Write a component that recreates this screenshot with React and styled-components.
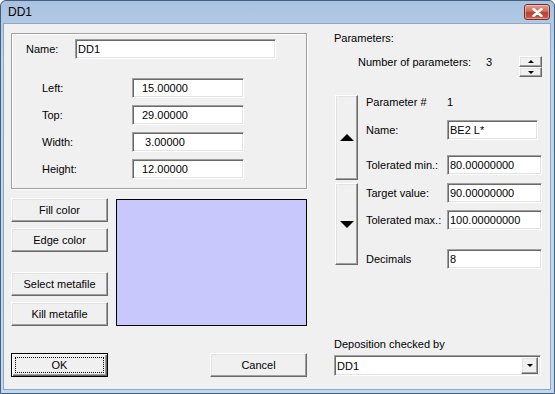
import React from 'react';
import styled, { createGlobalStyle } from 'styled-components';

const GlobalStyle = createGlobalStyle`
	html, body {
		margin: 0;
		padding: 0;
		background: #ffffff;
	}
	body {
		font-family: Tahoma, "Liberation Sans", Arial, sans-serif;
		font-size: 11px;
		color: #000000;
	}
`;

const Window = styled.div`
	box-sizing: border-box;
	width: 555px;
	height: 394px;
	display: flex;
	flex-direction: column;
	border: 1px solid #44607f;
	border-radius: 6px 6px 0 0;
	padding: 0 3px 3px 2px;
	background: linear-gradient(#a9c2df, #bfd5ec 60px, #c3d8ee);
`;

const TitleBar = styled.div`
	height: 22px;
	display: flex;
	align-items: center;
	justify-content: space-between;
	padding: 0 1px 0 5px;
	font-size: 12px;
`;

const CloseButton = styled.div`
	box-sizing: border-box;
	width: 26px;
	height: 16px;
	display: flex;
	align-items: center;
	justify-content: center;
	border: 1px solid #7a2e2a;
	border-radius: 3px;
	background: linear-gradient(#e1a196, #cd6a5c 45%, #b6402f 55%, #c8624f);
	box-shadow: inset 0 0 0 1px rgba(255, 220, 210, 0.5);
`;

const Client = styled.div`
	flex: 1;
	display: grid;
	grid-template-columns: 296px 208px;
	column-gap: 27px;
	padding: 0 8px 0 7px;
	background: #f0f0f0;
	border: 1px solid #8ea7c6;
`;

const Column = styled.div`
	display: flex;
	flex-direction: column;
	& > * {
		flex-shrink: 0;
	}
`;

const GroupBox = styled.div`
	box-sizing: border-box;
	height: 156px;
	margin-top: 9px;
	padding: 5px 0 0 14px;
	border: 1px solid #a0a0a0;
	box-shadow: inset 1px 1px 0 #ffffff, 1px 1px 0 #ffffff;
`;

const Row = styled.div`
	display: flex;
	align-items: center;
	height: 20px;
	margin-top: ${(p) => p.$gap || 0}px;
	padding-left: ${(p) => p.$indent || 0}px;
`;

const Label = styled.span`
	display: inline-block;
	width: ${(p) => p.$w}px;
	flex-shrink: 0;
	white-space: pre;
`;

const Field = styled.div`
	box-sizing: border-box;
	width: ${(p) => p.$w}px;
	height: ${(p) => p.$h || 20}px;
	display: flex;
	align-items: center;
	padding-left: ${(p) => p.$pad || 2}px;
	background: #ffffff;
	border: 1px solid;
	border-color: #a0a0a0 #ffffff #ffffff #a0a0a0;
	box-shadow: inset 1px 1px 0 #696969, inset -1px -1px 0 #e3e3e3;
	white-space: pre;
`;

const Lower = styled.div`
	display: grid;
	grid-template-columns: 97px 191px;
	column-gap: 8px;
	margin-top: 9px;
`;

const ButtonStack = styled.div`
	display: flex;
	flex-direction: column;
`;

const Button = styled.div`
	box-sizing: border-box;
	width: 97px;
	height: 24px;
	margin-top: ${(p) => p.$gap || 0}px;
	display: flex;
	align-items: center;
	justify-content: center;
	background: #f0f0f0;
	border: 1px solid;
	border-color: #ffffff #696969 #696969 #ffffff;
	box-shadow: inset -1px -1px 0 #a0a0a0, inset 1px 1px 0 #e3e3e3;
`;

const DefaultButton = styled(Button)`
	border: 1px solid #000000;
	box-shadow: inset 1px 1px 0 #ffffff, inset -1px -1px 0 #696969,
		inset -2px -2px 0 #a0a0a0;
	span {
		box-sizing: border-box;
		width: 89px;
		height: 16px;
		display: flex;
		align-items: center;
		justify-content: center;
		border: 1px dotted #000000;
	}
`;

const Preview = styled.div`
	box-sizing: border-box;
	height: 127px;
	margin-top: 1px;
	background: #c8c8fc;
	border: 1px solid #000000;
`;

const Footer = styled.div`
	display: flex;
	justify-content: space-between;
	margin-top: 27px;
`;

const Caption = styled.div`
	display: flex;
	line-height: 14px;
	margin-top: ${(p) => p.$gap || 0}px;
`;

const CountRow = styled.div`
	display: flex;
	align-items: flex-start;
	margin-top: 11px;
	padding-left: 24px;
	span {
		line-height: 14px;
		margin-top: -1px;
	}
`;

const Spinner = styled.div`
	display: flex;
	flex-direction: column;
	margin-left: auto;
`;

const SpinButton = styled(Button)`
	width: 23px;
	height: ${(p) => p.$h}px;
`;

const ParamPanel = styled.div`
	display: grid;
	grid-template-columns: 23px 1fr;
	column-gap: 8px;
	margin-top: 18px;
	padding-left: 1px;
`;

const Arrow = styled(Button)`
	width: 23px;
	height: ${(p) => p.$h}px;
`;

const ParamFields = styled.div`
	display: flex;
	flex-direction: column;
`;

const Deposition = styled.div`
	margin: auto 0 13px;
	display: flex;
	flex-direction: column;
	gap: 4px;
`;

const Combo = styled(Field)`
	justify-content: space-between;
	padding-right: 2px;
`;

const DropButton = styled(Button)`
	width: 17px;
	height: 17px;
`;

function Triangle({ up, size }) {
	const w = size * 2;
	return (
		<svg width={w} height={size} viewBox={`0 0 ${w} ${size}`}>
			<polygon
				points={up ? `0,${size} ${w / 2},0 ${w},${size}` : `0,0 ${w / 2},${size} ${w},0`}
				fill="#000"
			/>
		</svg>
	);
}

const sizeFields = [
	['Left:', '15.00000'],
	['Top:', '29.00000'],
	['Width:', ' 3.00000'],
	['Height:', '12.00000'],
];

export default function App() {
	return (
		<>
			<GlobalStyle />
			<Window>
				<TitleBar>
					<span>DD1</span>
					<CloseButton>
						<svg width="11" height="9" viewBox="0 0 11 9">
							<path
								d="M1.5 1 L9.5 8 M9.5 1 L1.5 8"
								stroke="#fff"
								strokeWidth="2.4"
								strokeLinecap="round"
							/>
						</svg>
					</CloseButton>
				</TitleBar>
				<Client>
					<Column>
						<GroupBox>
							<Row>
								<Label $w={49}>Name:</Label>
								<Field $w={201}>DD1</Field>
							</Row>
							{sizeFields.map(([label, value], i) => (
								<Row key={label} $gap={i === 0 ? 19 : 7} $indent={16}>
									<Label $w={90}>{label}</Label>
									<Field $w={112} $pad={9}>
										{value}
									</Field>
								</Row>
							))}
						</GroupBox>
						<Lower>
							<ButtonStack>
								<Button>Fill color</Button>
								<Button $gap={6}>Edge color</Button>
								<Button $gap={20}>Select metafile</Button>
								<Button $gap={6}>Kill metafile</Button>
							</ButtonStack>
							<Preview />
						</Lower>
						<Footer>
							<DefaultButton>
								<span>OK</span>
							</DefaultButton>
							<Button>Cancel</Button>
						</Footer>
					</Column>
					<Column>
						<Caption $gap={7}>Parameters:</Caption>
						<CountRow>
							<Label $w={128}>Number of parameters:</Label>
							<span>3</span>
							<Spinner>
								<SpinButton $h={11}>
									<Triangle up size={3} />
								</SpinButton>
								<SpinButton $h={10}>
									<Triangle size={3} />
								</SpinButton>
							</Spinner>
						</CountRow>
						<ParamPanel>
							<Column>
								<Arrow $h={85}>
									<Triangle up size={7} />
								</Arrow>
								<Arrow $h={82} $gap={3}>
									<Triangle size={7} />
								</Arrow>
							</Column>
							<ParamFields>
								<Caption>
									<Label $w={81}>Parameter #</Label>
									<span>1</span>
								</Caption>
								<Row $gap={11}>
									<Label $w={81}>Name:</Label>
									<Field $w={91}>BE2 L*</Field>
								</Row>
								<Row $gap={15}>
									<Label $w={81}>Tolerated min.:</Label>
									<Field $w={95}>80.00000000</Field>
								</Row>
								<Row $gap={8}>
									<Label $w={81}>Target value:</Label>
									<Field $w={95}>90.00000000</Field>
								</Row>
								<Row $gap={7}>
									<Label $w={81}>Tolerated max.:</Label>
									<Field $w={95}>100.00000000</Field>
								</Row>
								<Row $gap={19}>
									<Label $w={81}>Decimals</Label>
									<Field $w={95}>8</Field>
								</Row>
							</ParamFields>
						</ParamPanel>
						<Deposition>
							<Caption>Deposition checked by</Caption>
							<Combo $w={207} $h={21}>
								DD1
								<DropButton>
									<Triangle size={3} />
								</DropButton>
							</Combo>
						</Deposition>
					</Column>
				</Client>
			</Window>
		</>
	);
}
